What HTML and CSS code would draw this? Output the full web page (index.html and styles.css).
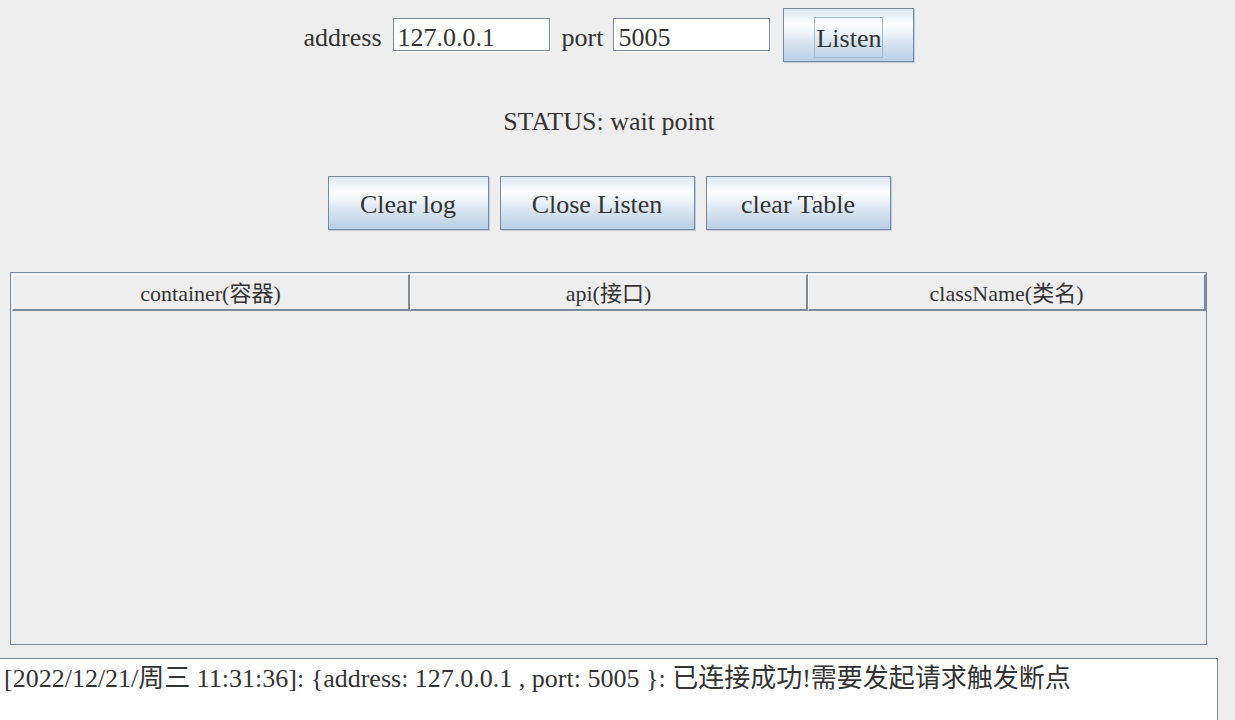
FILE: index.html
```html
<!DOCTYPE html>
<html>
<head>
<meta charset="utf-8">
<link rel="stylesheet" href="styles.css">
</head>
<body>
<div class="frame">
  <div class="top-row">
    <span class="label label-address">address</span>
    <div class="field field-address">127.0.0.1</div>
    <span class="label label-port">port</span>
    <div class="field field-port">5005</div>
    <div class="btn btn-listen"><span class="focus">Listen</span></div>
  </div>
  <div class="status">STATUS: wait point</div>
  <div class="btn-row">
    <div class="btn btn-clear">Clear log</div>
    <div class="btn btn-close">Close Listen</div>
    <div class="btn btn-table">clear Table</div>
  </div>
  <div class="table">
    <div class="thead">
      <div class="th">container(容器)</div>
      <div class="th">api(接口)</div>
      <div class="th">className(类名)</div>
    </div>
  </div>
  <div class="log">[2022/12/21/周三 11:31:36]: {address: 127.0.0.1 , port: 5005 }: 已连接成功!需要发起请求触发断点</div>
</div>
</body>
</html>
```
FILE: styles.css
```css
html, body {
  margin: 0;
  padding: 0;
  background: #eeeeee;
  overflow: hidden;
  height: 720px;
}
body {
  font-family: "Liberation Serif", "Noto Sans CJK SC", serif;
  color: #333333;
  font-size: 26px;
}
.frame {
  width: 1218px;
}
.top-row {
  display: flex;
  justify-content: center;
  align-items: center;
  padding-top: 8px;
  height: 55px;
}
.label {
  line-height: 30px;
  padding-top: 4px;
}
.label-address { margin-right: 11px; }
.label-port { margin-left: 12px; margin-right: 10px; }
.field {
  box-sizing: border-box;
  width: 157px;
  height: 33px;
  border: 1px solid #7a8a99;
  box-shadow: 1px 1px 0 #ffffff;
  background: #ffffff;
  padding-left: 4px;
  line-height: 38px;
  margin-top: -2px;
}
.btn {
  box-sizing: border-box;
  height: 54px;
  border: 1px solid #7a8a99;
  box-shadow: 1px 1px 0 #b8cfe5;
  background: linear-gradient(to bottom, #dde8f3 0%, #ffffff 30%, #dde8f3 60%, #b8cfe5 100%);
  display: flex;
  align-items: center;
  justify-content: center;
  line-height: 30px;
  padding-top: 4px;
}
.btn-listen {
  width: 131px;
  margin-left: 13px;
  margin-top: -1px;
}
.focus {
  box-sizing: border-box;
  width: 69px;
  height: 41px;
  border: 1px solid #a3b8cc;
  display: flex;
  align-items: center;
  justify-content: center;
  padding-top: 3px;
}
.status {
  margin-top: 44px;
  text-align: center;
  line-height: 30px;
  height: 30px;
}
.btn-row {
  margin-top: 39px;
  display: flex;
  justify-content: center;
  gap: 11px;
  height: 55px;
}
.btn-clear { width: 161px; }
.btn-close { width: 195px; }
.btn-table { width: 185px; }
.table {
  box-sizing: border-box;
  margin-top: 41px;
  margin-left: 10px;
  width: 1197px;
  height: 373px;
  border: 1px solid #7a8a99;
  padding: 1px 0 0 1px;
}
.thead {
  display: flex;
  width: 1194px;
}
.th {
  box-sizing: border-box;
  width: 398px;
  height: 37px;
  border-top: 1px solid #ffffff;
  border-left: 1px solid #ffffff;
  border-right: 2px solid #7a8a99;
  border-bottom: 2px solid #7a8a99;
  font-size: 22px;
  text-align: center;
  line-height: 34px;
  padding-top: 2px;
}
.log {
  box-sizing: border-box;
  margin-top: 13px;
  width: 1218px;
  height: 80px;
  background: #ffffff;
  border-top: 1px solid #7a8a99;
  border-right: 1px solid #7a8a99;
  padding: 5px 0 0 4px;
  line-height: 30px;
  white-space: nowrap;
}
```
